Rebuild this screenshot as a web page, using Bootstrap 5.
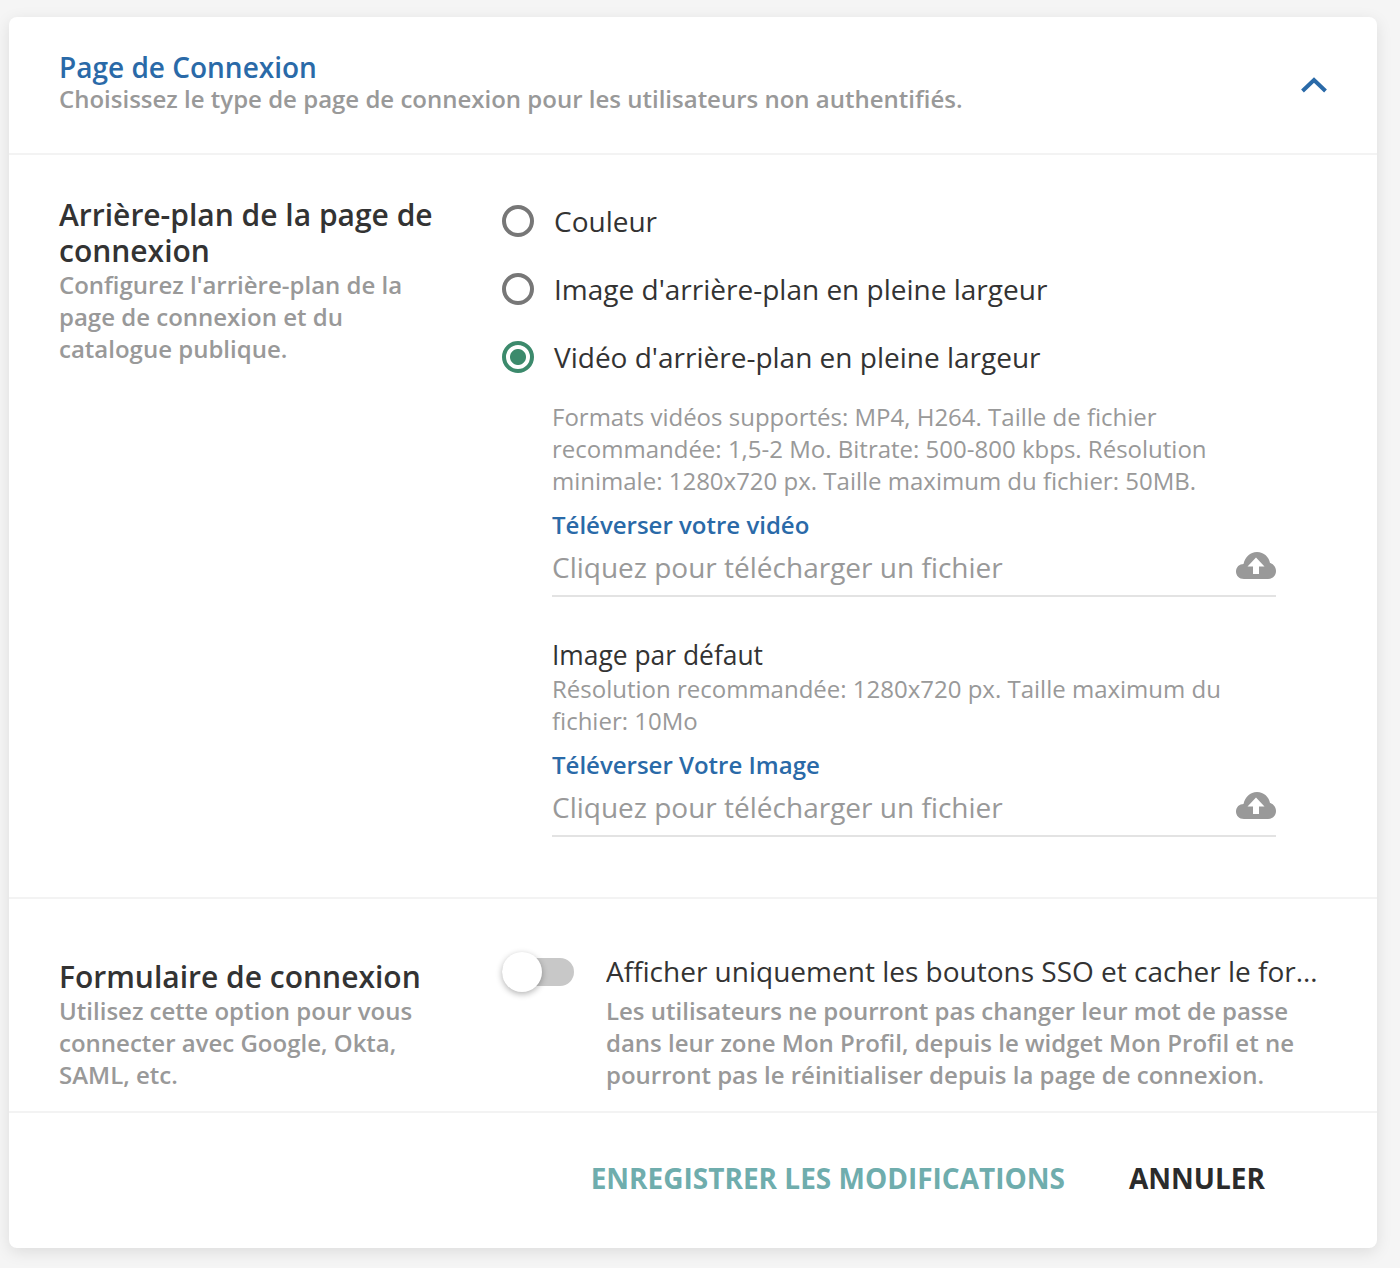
<!doctype html>
<html lang="fr"><head><meta charset="utf-8">
<link href="https://cdn.jsdelivr.net/npm/bootstrap@5.3.0/dist/css/bootstrap.min.css" rel="stylesheet">
<style>
html,body{height:100%}
body{background:#f5f5f5;font-family:"Open Sans",sans-serif;color:#333;margin:0;overflow:hidden}
.sheet{margin:17px 23px 0 9px;width:1368px;height:1231px;background:#fff;border-radius:8px;box-shadow:0 4px 16px rgba(0,0,0,.1);display:flex;flex-direction:column}
.sheet-head{height:138px;padding:35px 49px 0 50px;border-bottom:2px solid #f3f3f3;display:flex;justify-content:space-between}
.sheet-title{font-size:28px;line-height:31px;color:#2a6aa8;font-weight:600}
.muted-txt{font-size:24px;line-height:32px;color:#999}
.head-desc{font-weight:600}
.chev{margin:24px 0 0 0}
.sec-one{height:744px;border-bottom:2px solid #f3f3f3;padding:42px 50px 0;display:flex}
.sec-two{height:214px;border-bottom:2px solid #f3f3f3;padding:60px 50px 0;display:flex}
.left-col{width:443px;flex:none;padding-right:40px}
.left-title{font-size:30px;line-height:36px;font-weight:600}
.right-col{flex:1;min-width:0}
.sec-one .right-col{margin-top:-10px}
.sec-two .right-col{margin-top:-2px}
.left-col .muted-txt{font-weight:600}
.radio-line{height:68px;display:flex;align-items:center;gap:20px;font-size:28px}
.rad{width:32px;height:32px;border-radius:50%;border:4px solid #777;flex:none;display:block}
.rad-on{border-color:#3c8a6c;background:radial-gradient(circle,#3c8a6c 0 7.5px,#fff 8.5px)}
.sub-block{margin:10px 0 0 50px;width:724px}
.blue-lab{font-size:24px;line-height:32px;color:#2a6aa8;font-weight:600;margin-top:12px}
.up-field{height:56px;border-bottom:2px solid #e3e3e3;display:flex;justify-content:space-between;align-items:flex-start;font-size:28px;color:#999;padding-top:7px;line-height:38px}
.up-field svg{margin-top:3px}
.img-title{font-size:26.4px;line-height:36px;margin-top:40px}
.tog-track{width:72px;height:28px;border-radius:14px;background:#c8c8c8;position:relative;flex:none;margin:1px 32px 0 0}
.tog-knob{position:absolute;left:0;top:-6px;width:40px;height:40px;border-radius:50%;background:#fff;box-shadow:0 2px 6px rgba(0,0,0,.3)}
.tog-text{flex:1;min-width:0;margin-top:-5px}
.tog-line{font-size:28px;line-height:38px;white-space:nowrap;overflow:hidden;text-overflow:ellipsis;margin-bottom:5px}
.foot-acts{flex:1;display:flex;justify-content:flex-end;align-items:center;padding:0 112px 6px 0;gap:64px;font-size:28px;font-weight:700}
.act-save{color:#6fadad}
.act-cancel{color:#2b2b2b}
</style></head><body>
<div class="sheet">
 <div class="sheet-head">
  <div><div class="sheet-title">Page de Connexion</div><div class="muted-txt head-desc">Choisissez le type de page de connexion pour les utilisateurs non authentifiés.</div></div>
  <svg class="chev" width="28" height="18" viewBox="0 0 28 18" aria-hidden="true"><path d="M2.500 15 14 4 25.500 15" fill="none" stroke="#2a6aa8" stroke-width="4"/></svg>
 </div>
 <div class="sec-one">
  <div class="left-col"><div class="left-title">Arrière-plan de la page de connexion</div><div class="muted-txt">Configurez l'arrière-plan de la page de connexion et du catalogue publique.</div></div>
  <div class="right-col">
   <div class="radio-line"><span class="rad"></span><span>Couleur</span></div>
   <div class="radio-line"><span class="rad"></span><span>Image d'arrière-plan en pleine largeur</span></div>
   <div class="radio-line"><span class="rad rad-on"></span><span>Vidéo d'arrière-plan en pleine largeur</span></div>
   <div class="sub-block">
    <div class="muted-txt">Formats vidéos supportés: MP4, H264. Taille de fichier recommandée: 1,5-2 Mo. Bitrate: 500-800 kbps. Résolution minimale: 1280x720 px. Taille maximum du fichier: 50MB.</div>
    <div class="blue-lab">Téléverser votre vidéo</div>
    <div class="up-field"><span>Cliquez pour télécharger un fichier</span><svg width="40" height="28" viewBox="0 0 40 28" aria-hidden="true"><path fill="#999" fill-rule="evenodd" d="M8 28C3 28 0 24.500 0 20.500 0 16 3.500 13 7.500 13 9 6 14 1 21 1c7 0 12 5 13 11 3.500 1 6 4 6 8 0 4.500-3.500 8-8 8ZM20 6.500 11.500 15.500H17V23H23V15.500H28.500Z"/></svg></div>
    <div class="img-title">Image par défaut</div>
    <div class="muted-txt">Résolution recommandée: 1280x720 px. Taille maximum du fichier: 10Mo</div>
    <div class="blue-lab">Téléverser Votre Image</div>
    <div class="up-field"><span>Cliquez pour télécharger un fichier</span><svg width="40" height="28" viewBox="0 0 40 28" aria-hidden="true"><path fill="#999" fill-rule="evenodd" d="M8 28C3 28 0 24.500 0 20.500 0 16 3.500 13 7.500 13 9 6 14 1 21 1c7 0 12 5 13 11 3.500 1 6 4 6 8 0 4.500-3.500 8-8 8ZM20 6.500 11.500 15.500H17V23H23V15.500H28.500Z"/></svg></div>
   </div>
  </div>
 </div>
 <div class="sec-two">
  <div class="left-col"><div class="left-title">Formulaire de connexion</div><div class="muted-txt">Utilisez cette option pour vous connecter avec Google, Okta, SAML, etc.</div></div>
  <div class="right-col d-flex align-items-start">
   <div class="tog-track"><span class="tog-knob"></span></div>
   <div class="tog-text"><div class="tog-line">Afficher uniquement les boutons SSO et cacher le formulaire de connexion</div><div class="muted-txt fw-semibold">Les utilisateurs ne pourront pas changer leur mot de passe dans leur zone Mon Profil, depuis le widget Mon Profil et ne pourront pas le réinitialiser depuis la page de connexion.</div></div>
  </div>
 </div>
 <div class="foot-acts"><span class="act-save">ENREGISTRER LES MODIFICATIONS</span><span class="act-cancel">ANNULER</span></div>
</div>
</body></html>
